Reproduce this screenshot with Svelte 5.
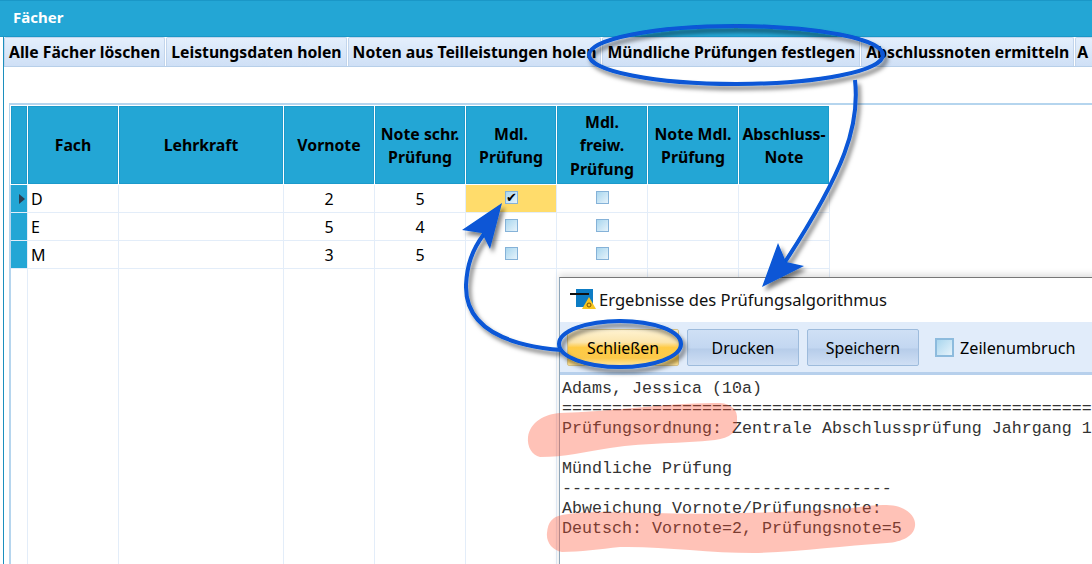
<script>
    const tools = [
        "Alle Fächer löschen",
        "Leistungsdaten holen",
        "Noten aus Teilleistungen holen",
        "Mündliche Prüfungen festlegen",
        "Abschlussnoten ermitteln",
        "A",
    ];
    const columns = [
        { lines: [] },
        { lines: ["Fach"] },
        { lines: ["Lehrkraft"] },
        { lines: ["Vornote"] },
        { lines: ["Note schr.", "Prüfung"] },
        { lines: ["Mdl.", "Prüfung"] },
        { lines: ["Mdl.", "freiw.", "Prüfung"] },
        { lines: ["Note Mdl.", "Prüfung"] },
        { lines: ["Abschluss-", "Note"] },
    ];
    const rows = [
        { fach: "D", vornote: 2, schr: 5, checked: true },
        { fach: "E", vornote: 5, schr: 4, checked: false },
        { fach: "M", vornote: 3, schr: 5, checked: false },
    ];
</script>

<div class="page">
    <div class="title">Fächer</div>
    <div class="content">
        <div class="toolbar">
            {#each tools as t}
                <div class="tool">{t}</div>
            {/each}
        </div>

        <div class="frame">
            <div class="grid">
                {#each columns as c}
                    <div class="head">
                        {#each c.lines as line}
                            <span>{line}</span>
                        {/each}
                    </div>
                {/each}
                {#each rows as r, i}
                    <div class="rowhead-cell">
                        {#if i === 0}<span class="pointer"></span>{/if}
                    </div>
                    <div class="cell left">{r.fach}</div>
                    <div class="cell"></div>
                    <div class="cell">{r.vornote}</div>
                    <div class="cell">{r.schr}</div>
                    <div class="cell" class:active={r.checked}>
                        <span class="check">{#if r.checked}✔{/if}</span>
                    </div>
                    <div class="cell"><span class="check"></span></div>
                    <div class="cell"></div>
                    <div class="cell"></div>
                {/each}
                {#each columns as c}
                    <div class="blank"></div>
                {/each}
            </div>
        </div>
    </div>

    <div class="dialog">
        <div class="dlg-title">
            <svg width="26" height="21" viewBox="0 0 26 21">
                <rect x="6" y="0" width="17" height="18" fill="#0d7cc4" />
                <rect x="0" y="4" width="19" height="2" fill="#111" />
                <path d="M19 8 L26 20 H12 Z" fill="#f7c51f" />
                <circle cx="19" cy="16" r="2" fill="none" stroke="#7a5200" stroke-width="1" />
            </svg>
            <span>Ergebnisse des Prüfungsalgorithmus</span>
        </div>
        <div class="dlg-bar">
            <div class="btn hot">Schließen</div>
            <div class="btn">Drucken</div>
            <div class="btn">Speichern</div>
            <div class="wrap"><span class="check big"></span>Zeilenumbruch</div>
        </div>
        <pre class="log">Adams, Jessica (10a)
==============================================================
Prüfungsordnung: Zentrale Abschlussprüfung Jahrgang 10

Mündliche Prüfung
---------------------------------
Abweichung Vornote/Prüfungsnote:
Deutsch: Vornote=2, Prüfungsnote=5</pre>
    </div>

    <svg class="marks" width="1092" height="564" viewBox="0 0 1092 564">
        <defs>
            <filter id="shade" x="-10%" y="-10%" width="125%" height="125%">
                <feDropShadow dx="3" dy="4" stdDeviation="2" flood-color="#000" flood-opacity="0.5" />
            </filter>
        </defs>
        <path class="blob" d="M528 437 C530 422 545 414 560 413 C610 412 670 402 720 403 C732 404 738 410 737 420 C738 432 730 438 715 440 C680 444 650 442 610 448 C585 452 565 457 540 457 C532 455 527 447 528 437 Z" />
        <path class="blob" d="M547 533 C548 522 552 517 562 515 C590 510 620 513 653 513 C720 515 790 512 853 508 C870 505 885 504 896 506 C910 510 916 518 915 526 C914 536 902 542 887 543 C840 546 800 552 753 553 C710 553 660 546 620 547 C600 549 580 552 562 552 C552 550 546 542 547 533 Z" />
        <g filter="url(#shade)">
            <ellipse class="ring" cx="736" cy="55" rx="147" ry="29" />
            <path class="line" d="M855 80 C860 125 845 170 785 262" />
            <path class="arrow" d="M762 287 L778 243 L786 262 L804 266 Z" />
            <ellipse class="ring" cx="620" cy="344" rx="61" ry="23" />
            <path class="line" d="M562 350 C500 345 465 325 466 285 C467 265 472 250 484 234" />
            <path class="arrow" d="M502 203 L462 230 L482 233 L490 249 Z" />
        </g>
    </svg>
</div>

<style>
    :global(body) {
        margin: 0;
        background: #fff;
    }

    .page {
        position: relative;
        width: 1092px;
        height: 564px;
        overflow: hidden;
        background: #fff;
        font-family: "Noto Sans", "Open Sans", sans-serif;
        color: #000;
    }

    .title {
        height: 37px;
        box-sizing: border-box;
        background: #23a6d5;
        border-top: 1px solid #1a97c7;
        border-bottom: 1px solid #1a97c7;
        color: #fff;
        font-weight: 700;
        font-size: 15px;
        line-height: 33px;
        padding-left: 13px;
    }

    .content {
        margin-left: 3px;
        height: 527px;
        border-left: 1px solid #1c8fbe;
    }

    .toolbar {
        display: flex;
        height: 30px;
        box-sizing: border-box;
        overflow: hidden;
        border-bottom: 1px solid #b7cfe9;
    }

    .tool {
        flex: none;
        padding: 0 4px;
        line-height: 29px;
        font-size: 15.75px;
        font-weight: 700;
        white-space: nowrap;
        margin-right: 1px;
        border: 1px solid #c2d5ec;
        border-bottom: none;
        border-radius: 2px 2px 0 0;
        background: linear-gradient(#e4effc, #cfe0f6);
    }

    .tool:last-child {
        padding-left: 1px;
    }

    .frame {
        margin: 36px 0 0 5px;
        height: 461px;
        border-top: 2px solid #b5d5ee;
        border-left: 2px solid #b5d5ee;
    }

    .grid {
        display: grid;
        grid-template-columns: 16px 90px 164px 90px 90px 90px 90px 90px 90px;
        grid-template-rows: 78px 27px 27px 27px 1fr;
        gap: 1px;
        width: 819px;
        height: 100%;
        padding-top: 1px;
        box-sizing: border-box;
        background: #e3edf9;
        border-right: 1px solid #e3edf9;
    }

    .head {
        background: #23a6d5;
        display: flex;
        flex-direction: column;
        align-items: center;
        justify-content: center;
        text-align: center;
        font-weight: 700;
        font-size: 15.8px;
        line-height: 23.5px;
        padding-top: 2px;
        white-space: nowrap;
        box-shadow: 0 0 0 1px #fff;
        border: 1px solid #1c9acb;
        box-sizing: border-box;
    }

    .rowhead-cell {
        background: #23a6d5;
        display: flex;
        align-items: center;
        padding-left: 8px;
    }

    .pointer {
        width: 0;
        height: 0;
        border-left: 6px solid #2c3e50;
        border-top: 5px solid transparent;
        border-bottom: 5px solid transparent;
    }

    .cell {
        background: #fff;
        display: flex;
        align-items: center;
        justify-content: center;
        font-size: 16px;
    }

    .cell.left {
        justify-content: flex-start;
        padding-left: 3px;
    }

    .cell.active {
        background: #ffdc6b;
    }

    .blank {
        background: #fff;
    }

    .check {
        width: 11px;
        height: 11px;
        border: 1px solid #85b2d8;
        background: linear-gradient(135deg, #a9d6ee, #e6f3fb);
        display: flex;
        align-items: center;
        justify-content: center;
        font-size: 13px;
        line-height: 1;
        color: #000;
        margin-top: -2px;
    }

    .check.big {
        width: 15px;
        height: 15px;
        border: 2px solid #8dbbdd;
        margin: 0 6px 0 0;
    }

    .dialog {
        position: absolute;
        left: 559px;
        top: 277px;
        width: 540px;
        height: 300px;
        background: #fff;
        border-top: 1px solid #777;
        border-left: 1px solid #8fa6b8;
        box-shadow: 0 -3px 6px rgba(0, 0, 0, 0.12);
    }

    .dlg-title {
        height: 44px;
        box-sizing: border-box;
        padding: 0 0 2px 10px;
        display: flex;
        align-items: center;
        gap: 3px;
        font-size: 16.6px;
        color: #111;
    }

    .dlg-bar {
        height: 53px;
        box-sizing: border-box;
        display: flex;
        align-items: center;
        gap: 8px;
        padding: 1px 0 0 7px;
        background: #e1ecfa;
        border-bottom: 3px solid #b7d0ec;
    }

    .btn {
        width: 112px;
        height: 37px;
        box-sizing: border-box;
        display: flex;
        align-items: center;
        justify-content: center;
        border: 1px solid #9dbbdc;
        border-radius: 2px;
        background: linear-gradient(#cfe0f5 0, #c3d7f1 50%, #b7cdea 55%, #cfdff4 100%);
        font-size: 15.9px;
    }

    .btn.hot {
        background: linear-gradient(#fff3d1 0, #fbe5ad 35%, #ffcb45 50%, #fbc94a 80%, #ffe49a 100%);
        border-color: #d8c48a;
    }

    .wrap {
        display: flex;
        align-items: center;
        margin-left: 8px;
        font-size: 16.2px;
    }

    .log {
        margin: 4px 0 0 2px;
        font-family: "Liberation Mono", "Courier New", monospace;
        font-size: 16.67px;
        line-height: 20px;
        color: #333;
        white-space: pre;
    }

    .marks {
        position: absolute;
        left: 0;
        top: 0;
        pointer-events: none;
    }

    .blob {
        fill: #ff5030;
        opacity: 0.35;
    }

    .ring,
    .line {
        fill: none;
        stroke: #0757d6;
        stroke-width: 4;
    }

    .arrow {
        fill: #0757d6;
    }
</style>
